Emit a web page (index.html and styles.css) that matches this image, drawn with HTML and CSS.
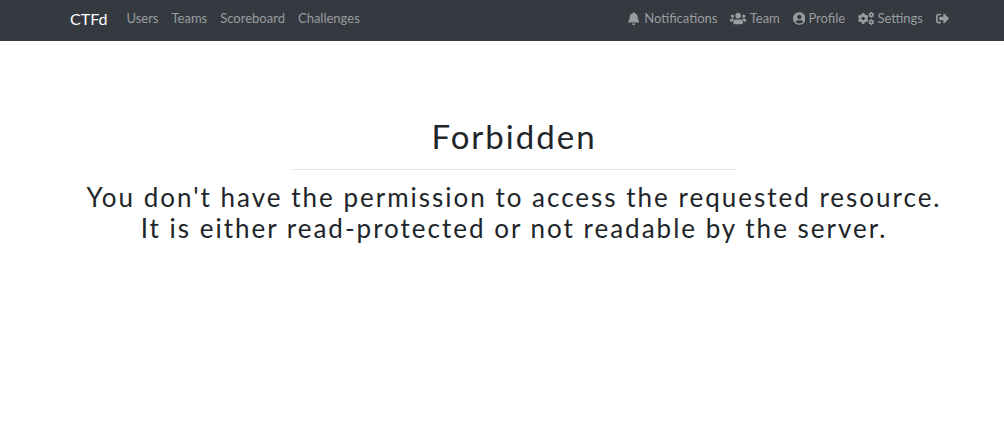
FILE: index.html
```html
<!DOCTYPE html>
<html lang="en">
<head>
<meta charset="utf-8">
<title>CTFd</title>
<link rel="stylesheet" href="styles.css">
</head>
<body>
<nav class="navbar">
  <div class="container navbar-inner">
    <a class="brand" href="#">CTFd</a>
    <ul class="nav">
      <li><a class="nav-link" href="#">Users</a></li>
      <li><a class="nav-link" href="#">Teams</a></li>
      <li><a class="nav-link" href="#">Scoreboard</a></li>
      <li><a class="nav-link" href="#">Challenges</a></li>
    </ul>
    <ul class="nav nav-right">
      <li><a class="nav-link nav-link-wide" href="#"><svg class="icon" viewBox="0 0 448 512" aria-hidden="true"><path d="M224 512c35.32 0 63.97-28.65 63.97-64H160.03c0 35.35 28.65 64 63.97 64zm215.39-149.71c-19.32-20.76-55.47-51.99-55.47-154.29 0-77.7-54.48-139.9-127.94-155.16V32c0-17.67-14.32-32-31.98-32s-31.98 14.33-31.98 32v20.84C118.56 68.1 64.08 130.3 64.08 208c0 102.3-36.15 133.53-55.47 154.29-6 6.45-8.66 14.16-8.61 21.71.11 16.4 12.98 32 32.1 32h383.8c19.12 0 32-15.6 32.1-32 .05-7.55-2.61-15.27-8.61-21.71z"/></svg>Notifications</a></li>
      <li><a class="nav-link" href="#"><svg class="icon" viewBox="0 0 640 512" aria-hidden="true"><path d="M96 224c35.3 0 64-28.7 64-64s-28.7-64-64-64-64 28.7-64 64 28.7 64 64 64zm448 0c35.3 0 64-28.7 64-64s-28.7-64-64-64-64 28.7-64 64 28.7 64 64 64zm32 32h-64c-17.6 0-33.5 7.1-45.1 18.6 40.3 22.1 68.9 62 75.1 109.4h66c17.7 0 32-14.3 32-32v-32c0-35.3-28.7-64-64-64zm-256 0c61.9 0 112-50.1 112-112S381.9 32 320 32 208 82.1 208 144s50.1 112 112 112zm76.8 32h-8.3c-20.8 10-43.9 16-68.5 16s-47.6-6-68.5-16h-8.3C179.6 288 128 339.6 128 403.2V432c0 26.5 21.5 48 48 48h288c26.5 0 48-21.5 48-48v-28.8c0-63.6-51.6-115.2-115.2-115.2zm-223.7-13.4C161.5 263.1 145.6 256 128 256H64c-35.3 0-64 28.7-64 64v32c0 17.7 14.3 32 32 32h65.9c6.3-47.4 34.9-87.3 75.2-109.4z"/></svg>Team</a></li>
      <li><a class="nav-link" href="#"><svg class="icon" viewBox="0 0 496 512" aria-hidden="true"><path d="M248 8C111 8 0 119 0 256s111 248 248 248 248-111 248-248S385 8 248 8zm0 96c48.6 0 88 39.4 88 88s-39.4 88-88 88-88-39.4-88-88 39.4-88 88-88zm0 344c-58.7 0-111.3-26.6-146.5-68.2 18.8-35.4 55.6-59.8 98.5-59.8 2.4 0 4.8.4 7.1 1.1 13 4.2 26.6 6.9 40.9 6.9 14.3 0 28-2.7 40.9-6.9 2.3-.7 4.7-1.1 7.1-1.1 42.9 0 79.7 24.4 98.5 59.8C359.3 421.4 306.7 448 248 448z"/></svg>Profile</a></li>
      <li><a class="nav-link" href="#"><svg class="icon" viewBox="0 0 640 512" aria-hidden="true"><g fill="none" stroke="currentColor"><circle cx="205" cy="256" r="122" stroke-width="104"/><path stroke-width="96" d="M205 40v70M205 402v70M22 150l62 36M326 326l62 36M22 362l62-36M326 186l62-36"/><circle cx="525" cy="112" r="62" stroke-width="60"/><path stroke-width="50" d="M525 0v40M525 184v40M428 57l36 20M586 147l36 20M428 167l36-20M586 77l36-20"/><circle cx="525" cy="400" r="62" stroke-width="60"/><path stroke-width="50" d="M525 288v40M525 472v40M428 345l36 20M586 435l36 20M428 455l36-20M586 365l36-20"/></g></svg>Settings</a></li>
      <li><a class="nav-link" href="#" aria-label="Logout"><svg class="icon" viewBox="0 0 512 512" aria-hidden="true"><path d="M497 273L329 441c-15 15-41 4.500-41-17v-96H152c-13.300 0-24-10.700-24-24v-96c0-13.300 10.700-24 24-24h136V88c0-21.400 25.900-32 41-17l168 168c9.300 9.400 9.300 24.600 0 34zM192 436v-40c0-6.600-5.400-12-12-12H96c-17.700 0-32-14.300-32-32V160c0-17.700 14.300-32 32-32h84c6.600 0 12-5.400 12-12V76c0-6.600-5.400-12-12-12H96c-53 0-96 43-96 96v192c0 53 43 96 96 96h84c6.600 0 12-5.400 12-12z"/></svg></a></li>
    </ul>
  </div>
</nav>
<main class="page">
  <div class="container error">
    <h1 class="error-title">Forbidden</h1>
    <hr class="error-rule">
    <h2 class="error-text">You don't have the permission to access the requested resource. It is either read-protected or not readable by the server.</h2>
  </div>
</main>
</body>
</html>
```
FILE: styles.css
```css
* {
  box-sizing: border-box;
}

body {
  margin: 0;
  background: #fff;
  color: #212529;
  font-family: Lato, "Noto Sans", sans-serif;
  font-size: 13px;
  line-height: 20px;
}

.container {
  max-width: 912px;
  margin: 0 auto;
  padding: 0 12px;
}

.navbar {
  padding: 7px 0 10px 24px;
  background: #343a40;
}

.navbar-inner {
  display: flex;
  align-items: center;
}

.brand {
  margin-right: 19px;
  color: #fff;
  font-size: 16px;
  line-height: 24px;
  text-decoration: none;
}

.nav {
  display: flex;
  gap: 13px;
  margin: 0;
  padding: 0;
  list-style: none;
}

.nav-right {
  margin-left: auto;
  padding-right: 9px;
}

.nav-link {
  display: flex;
  align-items: center;
  gap: 3px;
  height: 22px;
  padding-bottom: 2px;
  color: #999c9f;
  text-decoration: none;
}

.nav-link-wide {
  gap: 5px;
}

.icon {
  height: 13px;
  fill: currentColor;
}

.page {
  padding: 76px 0 0 24px;
}

.error {
  text-align: center;
}

.error-title {
  margin: 0;
  font-size: 33px;
  font-weight: 400;
  line-height: 38px;
  letter-spacing: 2px;
}

.error-rule {
  width: 50%;
  height: 1px;
  margin: 14px auto 12px;
  border: 0;
  background: #e5e5e5;
}

.error-text {
  margin: 0;
  padding: 0 12px;
  font-size: 26px;
  font-weight: 400;
  line-height: 31px;
  letter-spacing: 2px;
}
```
